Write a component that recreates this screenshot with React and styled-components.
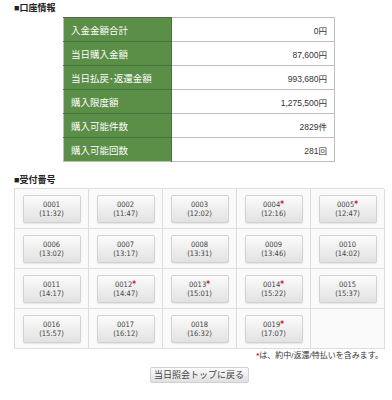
import React from "react";
import styled, { createGlobalStyle } from "styled-components";

const Global = createGlobalStyle`
  html, body { margin: 0; padding: 0; background: #fff; }
  body { font-family: "Liberation Sans", "Noto Sans CJK JP", sans-serif; color: #333; }
`;

const Page = styled.div`
  width: 370px;
  margin: 0 14px;
  padding-top: 2px;
`;

const Heading = styled.div`
  font-size: 9px;
  font-weight: bold;
  line-height: 12px;
  height: 12px;
  color: #222;
  margin-top: ${(p) => p.$top || 0}px;
  margin-bottom: ${(p) => p.$bottom || 0}px;
`;

const Table = styled.table`
  width: 272px;
  margin: 3px auto 0;
  border-collapse: collapse;
  border: 1px solid #bdbdbd;
`;

const Label = styled.th`
  width: 108px;
  height: 23px;
  padding: 0 0 0 7px;
  background: #5b8e47;
  color: #fff;
  font-weight: normal;
  font-size: 9.5px;
  text-align: left;
  border-top: 1px solid #47733a;
  border-right: 1px solid #47733a;
  box-sizing: border-box;
`;

const Value = styled.td`
  height: 23px;
  padding: 0 7px 0 0;
  font-size: 8.5px;
  text-align: right;
  color: #333;
  border-top: 1px solid #bdbdbd;
  background: #fff;
`;

const Grid = styled.div`
  display: grid;
  grid-template-columns: repeat(5, 74px);
  grid-auto-rows: 40px;
  border-top: 1px solid #ddd;
  border-left: 1px solid #ddd;
  box-sizing: border-box;
  width: 370px;
`;

const Cell = styled.div`
  display: flex;
  align-items: center;
  justify-content: center;
  border-right: 1px solid #ddd;
  border-bottom: 1px solid #ddd;
  background: #fafafa;
`;

const TicketButton = styled.button`
  width: 58px;
  height: 28px;
  padding: 0;
  border: 1px solid #d2d2d2;
  border-radius: 2px;
  background: linear-gradient(#fbfbfb, #e2e2e2);
  box-shadow: 0 1px 1px rgba(0, 0, 0, 0.08);
  font-family: "DejaVu Sans Condensed", "Liberation Sans", sans-serif;
  font-stretch: condensed;
  font-size: 7.5px;
  line-height: 9px;
  color: #444;
  display: flex;
  flex-direction: column;
  align-items: center;
  justify-content: center;
`;

const Mark = styled.span`
  color: #d0121b;
  font-size: 8px;
  font-weight: bold;
`;

const Note = styled.div`
  text-align: right;
  font-size: 8px;
  line-height: 12px;
  color: #333;
  margin-top: 1px;
  padding-right: 1px;
`;

const BackButton = styled.button`
  display: block;
  margin: 5px auto 0;
  width: 99px;
  height: 16px;
  padding: 0;
  border: 1px solid #d0d0d0;
  border-radius: 2px;
  background: linear-gradient(#fbfbfb, #e0e0e0);
  font-family: "Liberation Sans", "Noto Sans CJK JP", sans-serif;
  font-size: 9px;
  line-height: 14px;
  color: #444;
`;

const rows = [
  ["入金金額合計", "0円"],
  ["当日購入金額", "87,600円"],
  ["当日払戻･返還金額", "993,680円"],
  ["購入限度額", "1,275,500円"],
  ["購入可能件数", "2829件"],
  ["購入可能回数", "281回"],
];

const tickets = [
  ["0001", "11:32"], ["0002", "11:47"], ["0003", "12:02"], ["0004", "12:16", true], ["0005", "12:47", true],
  ["0006", "13:02"], ["0007", "13:17"], ["0008", "13:31"], ["0009", "13:46"], ["0010", "14:02"],
  ["0011", "14:17"], ["0012", "14:47", true], ["0013", "15:01", true], ["0014", "15:22", true], ["0015", "15:37"],
  ["0016", "15:57"], ["0017", "16:12"], ["0018", "16:32"], ["0019", "17:07", true], null,
];

export default function App() {
  return (
    <>
      <Global />
      <Page>
        <Heading>■口座情報</Heading>
        <Table>
          <tbody>
            {rows.map(([l, v]) => (
              <tr key={l}>
                <Label>{l}</Label>
                <Value>{v}</Value>
              </tr>
            ))}
          </tbody>
        </Table>
        <Heading $top={12} $bottom={2}>■受付番号</Heading>
        <Grid>
          {tickets.map((t, i) => (
            <Cell key={i}>
              {t && (
                <TicketButton>
                  <span>
                    {t[0]}
                    {t[2] && <Mark>*</Mark>}
                  </span>
                  <span>({t[1]})</span>
                </TicketButton>
              )}
            </Cell>
          ))}
        </Grid>
        <Note>
          <Mark>*</Mark>は、約中/返還/特払いを含みます。
        </Note>
        <BackButton>当日照会トップに戻る</BackButton>
      </Page>
    </>
  );
}
